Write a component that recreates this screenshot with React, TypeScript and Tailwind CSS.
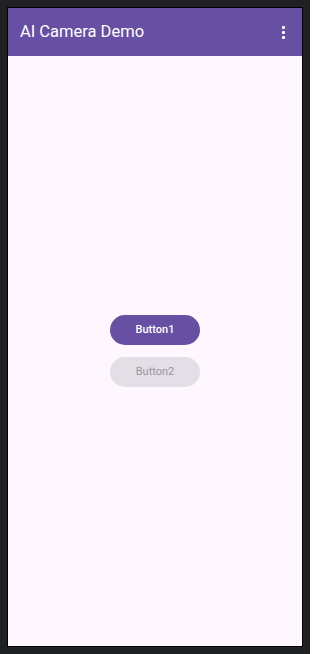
export default function App() {
  return (
    <div className="h-[654px] w-[310px] bg-[#202124] p-[7px]" style={{ fontFamily: "Roboto, 'Noto Sans', sans-serif" }}>
      <div className="flex h-full w-full flex-col border border-black bg-[#fef7ff]">
        <header className="flex h-12 shrink-0 items-center justify-between bg-[#6750a4] pl-3 pr-[17px]">
          <h1 className="text-[16.5px] font-normal text-white">AI Camera Demo</h1>
          <div className="flex flex-col gap-[2px]">
            <span className="block h-[3px] w-[3px] rounded-[1px] bg-white" />
            <span className="block h-[3px] w-[3px] rounded-[1px] bg-white" />
            <span className="block h-[3px] w-[3px] rounded-[1px] bg-white" />
          </div>
        </header>
        <main className="flex flex-1 flex-col items-center justify-center gap-3">
          <button className="h-[30px] w-[90px] rounded-full bg-[#6750a4] text-[11px] font-medium text-white">
            Button1
          </button>
          <button className="h-[30px] w-[90px] rounded-full bg-[#e3dfe6] text-[11px] font-normal text-[#9a969d]" disabled>
            Button2
          </button>
        </main>
      </div>
    </div>
  );
}
